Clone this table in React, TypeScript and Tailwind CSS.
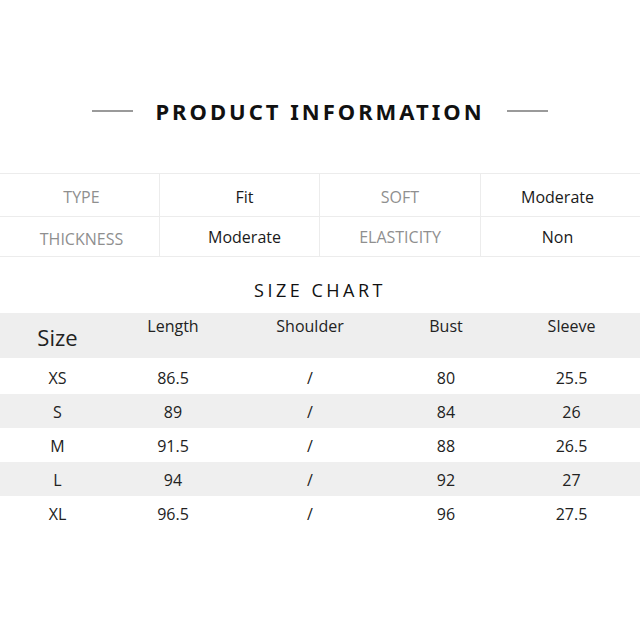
const info = [
  ["TYPE", "Fit", "SOFT", "Moderate"],
  ["THICKNESS", "Moderate", "ELASTICITY", "Non"],
];

const sizes = [
  ["XS", "86.5", "/", "80", "25.5"],
  ["S", "89", "/", "84", "26"],
  ["M", "91.5", "/", "88", "26.5"],
  ["L", "94", "/", "92", "27"],
  ["XL", "96.5", "/", "96", "27.5"],
];

const cols = "grid grid-cols-[115px_116px_158px_114px_137px]";
// small nudges so the text sits where the original image has it
const infoNudge = ["pl-[4px]", "pl-[10px]", "", "pr-[6px]"];

export default function App() {
  return (
    <div className="w-[640px] h-[640px] bg-white text-[#222] font-['Open_Sans','Noto_Sans',sans-serif]">
      {/* heading */}
      <div className="pt-[96px] h-[126px] flex items-center justify-center">
        <div className="w-[41px] h-[2px] bg-[#9a9a9a]" />
        <h1 className="mx-[22px] text-[22px] leading-[30px] font-bold tracking-[3px] text-[#111] font-['Noto_Sans',sans-serif]">
          PRODUCT INFORMATION
        </h1>
        <div className="w-[41px] h-[2px] bg-[#9a9a9a]" />
      </div>

      {/* info table */}
      <div className="mt-[47px] border-t border-b border-[#ececec]">
        {info.map((row, i) => (
          <div
            key={i}
            className={`grid grid-cols-[160px_160px_161px_159px] ${
              i === 0 ? "h-[43px] border-b border-[#ececec]" : "h-[39px]"
            }`}
          >
            {row.map((cell, j) => (
              <div
                key={j}
                className={`flex items-center justify-center ${infoNudge[j]} ${
                  j < 3 ? "border-r border-[#ececec]" : ""
                } ${
                  j % 2 === 0
                    ? "text-[16px] text-[#8f8f8f]"
                    : "text-[16px] text-[#1a1a1a]"
                } ${i === 0 ? "pt-[4px]" : ""} ${
                  i === 1 && j === 0 ? "pt-[5px]" : ""
                }`}
              >
                {cell}
              </div>
            ))}
          </div>
        ))}
      </div>

      {/* size chart */}
      <div className="mt-[20px] h-[26px] flex items-center justify-center text-[18px] tracking-[3.5px] text-[#111]">
        SIZE CHART
      </div>
      <div className={`${cols} mt-[10px] h-[45px] bg-[#eeeeee] text-[16px]`}>
        <div className="flex items-center justify-center pt-[4px] text-[22px]">
          Size
        </div>
        {["Length", "Shoulder", "Bust", "Sleeve"].map((h) => (
          <div key={h} className="flex justify-center pt-[1px]">
            {h}
          </div>
        ))}
      </div>
      <div className="mt-[2px]">
        {sizes.map((row, i) => (
          <div
            key={row[0]}
            className={`${cols} h-[34px] text-[16px] pt-[2px] ${
              i % 2 === 1 ? "bg-[#efefef]" : ""
            }`}
          >
            {row.map((cell, j) => (
              <div key={j} className="flex items-center justify-center">
                {cell}
              </div>
            ))}
          </div>
        ))}
      </div>
    </div>
  );
}
